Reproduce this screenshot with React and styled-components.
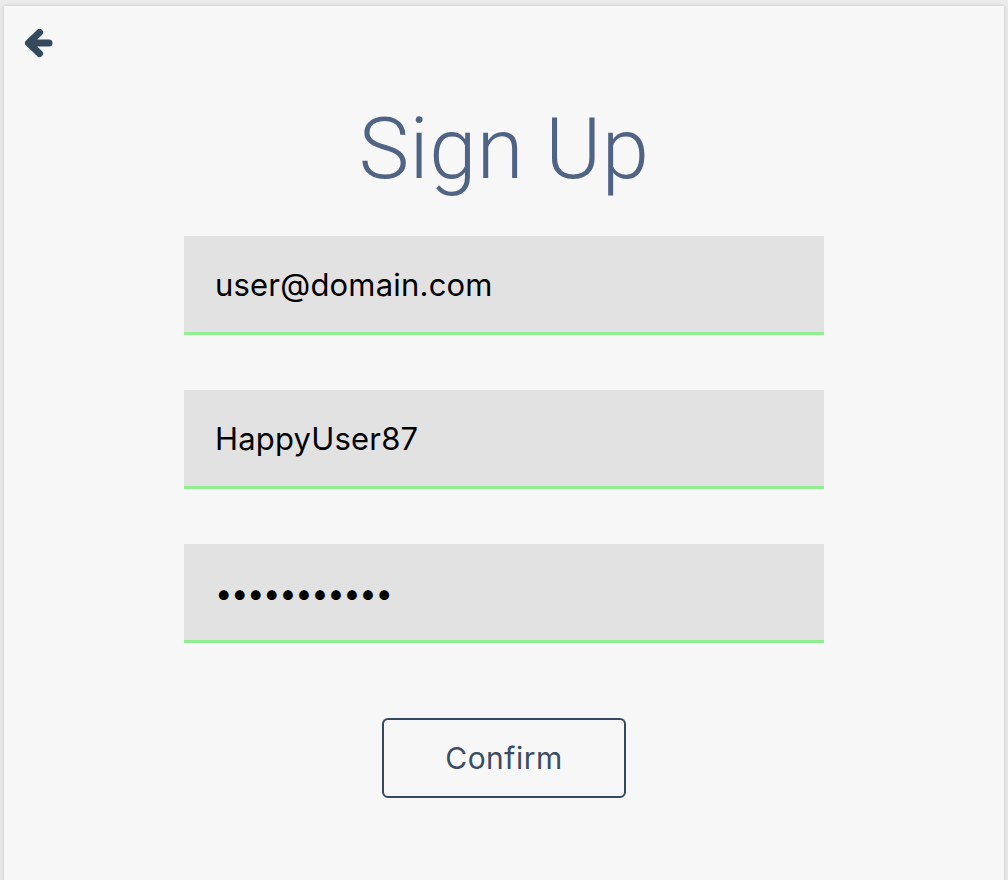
import React from 'react';
import styled, { createGlobalStyle } from 'styled-components';

const GlobalStyle = createGlobalStyle`
	body {
		margin: 0;
		background: #ebebeb;
		font-family: Inter, "Open Sans", sans-serif;
		overflow: hidden;
	}
`;

const Panel = styled.div`
	margin: 6px 4px 0;
	min-height: 900px;
	background: #f7f7f7;
	box-shadow: 0 0 4px rgba(0, 0, 0, 0.18);
	display: flex;
	flex-direction: column;
	align-items: center;
	padding: 21px 18px 0;
	box-sizing: border-box;
`;

const Back = styled.button`
	align-self: flex-start;
	border: none;
	background: none;
	padding: 0;
	color: #34495e;
	display: flex;
	cursor: pointer;
`;

const Title = styled.h1`
	margin: 40px 0 37px;
	font-family: Roboto, sans-serif;
	font-weight: 300;
	font-size: 85px;
	line-height: 100px;
	color: #4f6384;
	letter-spacing: 0.5px;
`;

const Form = styled.form`
	display: flex;
	flex-direction: column;
	align-items: center;
	gap: 55px;
`;

const Field = styled.input`
	width: 640px;
	height: 99px;
	box-sizing: border-box;
	border: none;
	border-bottom: 3px solid #90ee90;
	border-radius: 0;
	background: #e2e2e2;
	padding: 0 31px;
	font-family: Inter, "Open Sans", sans-serif;
	font-size: 31px;
	color: #000;
	outline: none;
	letter-spacing: ${props => (props.type === 'password' ? '-1.4px' : '0.2px')};
`;

const Confirm = styled.button`
	margin-top: 20px;
	width: 244px;
	height: 80px;
	border: 2px solid #34495e;
	border-radius: 6px;
	background: transparent;
	color: #3a4d64;
	font-family: Inter, "Open Sans", sans-serif;
	font-size: 30px;
	letter-spacing: 0.5px;
	cursor: pointer;
`;

const ArrowIcon = () => (
	<svg width="32" height="32" viewBox="0 0 32 32" fill="none">
		<path
			d="M17.5 5.5 L6.5 16 L17.5 26.5 M7 16 H27"
			stroke="currentColor"
			strokeWidth="7"
			strokeLinecap="round"
			strokeLinejoin="round"
		/>
	</svg>
);

const App = () => {
	return (
		<>
			<GlobalStyle />
			<Panel>
				<Back aria-label="Back">
					<ArrowIcon />
				</Back>
				<Title>Sign Up</Title>
				<Form onSubmit={e => e.preventDefault()}>
					<Field type="email" defaultValue="user@domain.com" />
					<Field type="text" defaultValue="HappyUser87" />
					<Field type="password" defaultValue="abcdefghijk" />
					<Confirm type="submit">Confirm</Confirm>
				</Form>
			</Panel>
		</>
	);
};

export default App;
